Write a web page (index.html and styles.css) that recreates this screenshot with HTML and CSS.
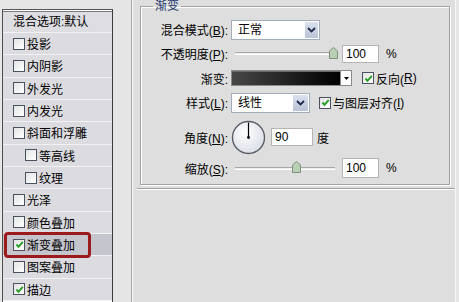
FILE: index.html
```html
<!DOCTYPE html>
<html lang="zh">
<head>
    <meta charset="UTF-8">
    <title>图层样式 - 渐变叠加</title>
    <link rel="stylesheet" href="styles.css">
</head>
<body>
    <div class="layers">
        <div class="layers-head">混合选项:默认</div>
        <div class="layer"><span class="cb"></span>投影</div>
        <div class="layer"><span class="cb"></span>内阴影</div>
        <div class="layer"><span class="cb"></span>外发光</div>
        <div class="layer"><span class="cb"></span>内发光</div>
        <div class="layer"><span class="cb"></span>斜面和浮雕</div>
        <div class="layer sub"><span class="cb"></span>等高线</div>
        <div class="layer sub"><span class="cb"></span>纹理</div>
        <div class="layer"><span class="cb"></span>光泽</div>
        <div class="layer"><span class="cb"></span>颜色叠加</div>
        <div class="layer selected">
            <span class="mark"><span class="cb on"><svg width="9" height="9" viewBox="0 0 9 9"><polyline points="1.5,4.5 3.5,6.8 7.8,1.8" fill="none" stroke="#2aa02a" stroke-width="2"/></svg></span>渐变叠加</span>
        </div>
        <div class="layer"><span class="cb"></span>图案叠加</div>
        <div class="layer"><span class="cb on"><svg width="9" height="9" viewBox="0 0 9 9"><polyline points="1.5,4.5 3.5,6.8 7.8,1.8" fill="none" stroke="#2aa02a" stroke-width="2"/></svg></span>描边</div>
    </div>

    <div class="spacer"></div>

    <div class="main">
        <fieldset class="group">
            <legend>渐变</legend>
            <div class="form">
                <label>混合模式(<u>B</u>):</label>
                <div class="ctl">
                    <div class="select mode">
                        <span class="val">正常</span>
                        <span class="arrow"><svg width="9" height="6" viewBox="0 0 9 6"><polyline points="1,1 4.5,4.5 8,1" fill="none" stroke="#1e2a48" stroke-width="1.8"/></svg></span>
                    </div>
                </div>

                <label>不透明度(<u>P</u>):</label>
                <div class="ctl">
                    <div class="slider">
                        <div class="track"></div>
                        <span class="thumb" style="left: 98%"><svg width="9" height="12" viewBox="0 0 9 12"><polygon points="0.5,4 4.5,0.5 8.5,4 8.5,11.5 0.5,11.5" fill="#b9d0b4" stroke="#7f907c"/></svg></span>
                    </div>
                    <span class="num">100</span>
                    <span class="unit">%</span>
                </div>

                <label>渐变:</label>
                <div class="ctl">
                    <div class="gradient">
                        <span class="ramp"></span>
                        <span class="drop"><svg width="5" height="3" viewBox="0 0 5 3"><polygon points="0,0 5,0 2.5,3" fill="#000"/></svg></span>
                    </div>
                    <span class="check reverse"><span class="cb on"><svg width="9" height="9" viewBox="0 0 9 9"><polyline points="1.5,4.5 3.5,6.8 7.8,1.8" fill="none" stroke="#2aa02a" stroke-width="2"/></svg></span>反向(<u>R</u>)</span>
                </div>

                <label>样式(<u>L</u>):</label>
                <div class="ctl">
                    <div class="select style">
                        <span class="val">线性</span>
                        <span class="arrow"><svg width="9" height="6" viewBox="0 0 9 6"><polyline points="1,1 4.5,4.5 8,1" fill="none" stroke="#1e2a48" stroke-width="1.8"/></svg></span>
                    </div>
                    <span class="check align"><span class="cb on"><svg width="9" height="9" viewBox="0 0 9 9"><polyline points="1.5,4.5 3.5,6.8 7.8,1.8" fill="none" stroke="#2aa02a" stroke-width="2"/></svg></span>与图层对齐(<u>I</u>)</span>
                </div>

                <label>角度(<u>N</u>):</label>
                <div class="ctl">
                    <svg class="dial" width="35" height="35" viewBox="0 0 35 35">
                        <defs>
                            <radialGradient id="dialfill" cx="40%" cy="35%" r="70%">
                                <stop offset="0" stop-color="#ffffff"/>
                                <stop offset="1" stop-color="#d9dde6"/>
                            </radialGradient>
                        </defs>
                        <circle cx="17.5" cy="17.5" r="16" fill="url(#dialfill)" stroke="#5a5e66" stroke-width="1.4"/>
                        <line x1="17.5" y1="17.5" x2="17.5" y2="2.5" stroke="#000" stroke-width="1.2"/>
                        <circle cx="17.5" cy="17.5" r="1.4" fill="#000"/>
                    </svg>
                    <span class="num angle">90</span>
                    <span class="unit deg">度</span>
                </div>

                <label>缩放(<u>S</u>):</label>
                <div class="ctl">
                    <div class="slider">
                        <div class="track"></div>
                        <span class="thumb" style="left: 61%"><svg width="9" height="12" viewBox="0 0 9 12"><polygon points="0.5,4 4.5,0.5 8.5,4 8.5,11.5 0.5,11.5" fill="#b9d0b4" stroke="#7f907c"/></svg></span>
                    </div>
                    <span class="num tall">100</span>
                    <span class="unit">%</span>
                </div>
            </div>
        </fieldset>
        <div class="sep"></div>
    </div>
</body>
</html>
```

FILE: styles.css
```css
body {
    margin: 0;
    width: 459px;
    height: 302px;
    overflow: hidden;
    display: flex;
    background-color: #e6e6e6;
    font-family: 'Liberation Sans', 'Noto Sans CJK SC', sans-serif;
    font-size: 12px;
    color: #000;
}
u {
    text-decoration: underline;
    text-underline-offset: 1px;
}

/* 左侧样式列表 */
.layers {
    width: 109px;
    margin: 9px 0 0 2px;
    border-left: 1px solid #4e4e4e;
    border-right: 1px solid #3c3c3c;
    border-top: 1px solid #555;
    padding-top: 1px;
    background-color: #fff;
    display: flex;
    flex-direction: column;
}
.layers-head {
    height: 20px;
    line-height: 20px;
    padding-left: 10px;
    border-top: 1px solid #7a7a7a;
    border-bottom: 1px solid #f2f2f4;
    background-color: #dedee2;
}
.layer {
    height: 21.33px;
    display: flex;
    align-items: center;
    padding-left: 10px;
    border-bottom: 1px solid #f2f2f4;
    background-color: #dcdce0;
}
.layer.sub {
    padding-left: 22px;
}
.layer.selected {
    background-color: #c5c5cd;
}
.cb {
    width: 10px;
    height: 10px;
    margin-right: 2px;
    border: 1px solid #4a5260;
    background: linear-gradient(135deg, #e4e4e4, #ffffff);
    display: inline-flex;
    align-items: center;
    justify-content: center;
    flex-shrink: 0;
}
.mark {
    position: relative;
    z-index: 1;
    display: inline-flex;
    align-items: center;
    height: 20px;
    margin-left: -9px;
    padding: 0 13px 0 6px;
    border: 3px solid #9c1a1c;
    border-radius: 4px;
}

.spacer {
    width: 18px;
    background-color: #e5e5e5;
    border-right: 1px solid #a6a6a6;
}

/* 右侧面板 */
.main {
    flex: 1;
    margin-right: 3px;
    background-color: #dedede;
    border-left: 1px solid #fafafa;
    border-right: 1px solid #f6f6f6;
}
.group {
    margin: 0 5px 0 7px;
    padding: 6px 0 7px 0;
    border: 1px solid #a2a2a2;
    box-shadow: inset 1px 1px 0 #fff, 1px 1px 0 #fff;
    min-width: 0;
}
.group legend {
    margin-left: 12px;
    padding: 0 2px;
    line-height: 12px;
    color: #24386e;
}
.form {
    display: grid;
    grid-template-columns: 87px 1fr;
    grid-template-rows: 23px 25px 24px 25px 44px 18px;
    column-gap: 3px;
    align-items: center;
}
.form label {
    text-align: right;
    white-space: nowrap;
}
.ctl {
    display: flex;
    align-items: center;
}

.select {
    height: 18px;
    display: flex;
    align-items: stretch;
    border: 1px solid #a3acbc;
    background-color: #fff;
}
.select .val {
    flex: 1;
    padding-left: 6px;
    line-height: 18px;
}
.select .arrow {
    display: flex;
    align-items: center;
    justify-content: center;
    border: 1px solid #fff;
    background: linear-gradient(#dbe1ee, #b9c2d6);
}
.select.mode {
    width: 87px;
}
.select.mode .arrow {
    width: 13px;
}
.select.style {
    width: 77px;
}
.select.style .arrow {
    width: 15px;
}

.slider {
    position: relative;
    width: 100px;
    height: 14px;
    margin-left: 4px;
    display: flex;
    align-items: center;
}
.track {
    width: 100%;
    height: 1px;
    border-top: 1px solid #a8a8a8;
    border-bottom: 1px solid #fff;
    background-color: #ececec;
}
.thumb {
    position: absolute;
    top: 0;
    margin-left: -4px;
    line-height: 0;
}
.num {
    width: 32px;
    height: 16px;
    line-height: 16px;
    margin-left: 7px;
    padding-left: 3px;
    border: 1px solid #b4b4b4;
    background-color: #fff;
}
.num.tall {
    height: 18px;
    line-height: 18px;
}
.num.angle {
    width: 37px;
    margin-left: 5px;
}
.unit {
    margin-left: 7px;
}
.unit.deg {
    margin-left: 4px;
}

.gradient {
    width: 119px;
    height: 14px;
    display: flex;
    border: 1px solid #8a8a8a;
    background-color: #fff;
}
.gradient .ramp {
    flex: 1;
    background: linear-gradient(to right, #474747, #262626 45%, #000);
    box-shadow: inset 0 1px 0 #6a6a6a;
}
.gradient .drop {
    width: 10px;
    display: flex;
    align-items: center;
    justify-content: center;
    border-left: 1px solid #8a8a8a;
}
.check {
    display: inline-flex;
    align-items: center;
}
.check .cb {
    margin-right: 2px;
}
.check.reverse {
    margin-left: 10px;
}
.check.align {
    margin-left: 9px;
}
.dial {
    display: block;
}

.sep {
    margin: 3px 0 0 4px;
    border-top: 1px solid #a2a2a2;
    border-bottom: 1px solid #fff;
}
```
